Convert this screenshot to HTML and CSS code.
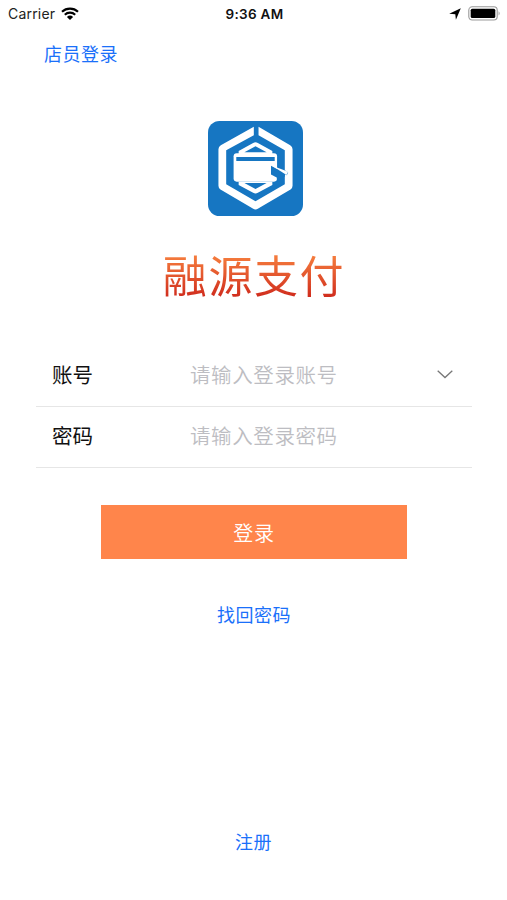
FILE: index.html
```html
<!DOCTYPE html>
<html lang="zh-CN">
<head>
<meta charset="utf-8">
<title>融源支付</title>
<link rel="stylesheet" href="styles.css">
</head>
<body>
<header class="status">
  <div class="status-left"><span>Carrier</span>
    <svg class="wifi" viewBox="0 0 18 14"><path d="M1 4.8a11.6 11.6 0 0 1 16 0M3.8 7.7a7.5 7.5 0 0 1 10.4 0" fill="none" stroke="#000" stroke-width="2.1"/><path d="M5.9 10a4.6 4.6 0 0 1 6.2 0L9 13z"/></svg>
  </div>
  <div class="time">9:36 AM</div>
  <div class="status-right">
    <svg class="arrow" viewBox="0 0 12 12"><path d="M11.8.2 6.9 11.8 6.3 6.3.2 5.7z"/></svg>
    <svg class="battery" viewBox="0 0 33 15"><rect x=".8" y=".8" width="28.4" height="13.2" rx="3.4" fill="#fff" stroke="#999" stroke-width="1.1"/><rect x="2.7" y="2.7" width="24.6" height="9.4" rx="1.6"/><path d="M30.6 5.2q2 2.2 0 4.4z" fill="#999"/></svg>
  </div>
</header>
<nav class="topbar"><a class="link">店员登录</a></nav>
<main>
  <svg class="logo" viewBox="24 19 282 282">
    <rect x="24" y="19" width="282" height="282" rx="34" fill="#1676c2"/>
    <path fill="#fff" d="M160 36 62 91Q55 95 55 103V211Q55 218 61 222L157 279Q165 284 173 279L269 222Q275 218 275 211V103Q275 95 268 91L174 36V61L252 106V165L262 171 258 180 252 177V207L165 257 78 207V106L160 61z"/>
    <path fill="#fff" d="M158 84Q165 80 172 84L215 108V117H115V108zM115 199H215V209L172 232Q165 236 158 232L115 209z"/>
    <path fill="#1676c2" d="M165 94 198 112H132zM165 221 198 203H132z"/>
    <rect x="100" y="115" width="129" height="84" rx="9" fill="#fff"/>
    <path fill="#1676c2" d="M108 126H222V138H108zM211 152 252 173V184L229 198 228 187 211 178z"/>
    <path fill="#fff" d="M213 151 262 170 257 179z"/>
  </svg>
  <h1>融源支付</h1>
  <form class="form">
    <div class="row"><span class="label">账号</span><span class="hint">请输入登录账号</span>
      <svg class="chevron" viewBox="0 0 16 9"><path d="m.7.8 7.3 6.8L15.3.8" fill="none" stroke="#777" stroke-width="1.3"/></svg></div>
    <div class="row"><span class="label">密码</span><span class="hint">请输入登录密码</span></div>
    <button class="submit" type="button">登录</button>
  </form>
  <a class="link">找回密码</a>
</main>
<footer><a class="link">注册</a></footer>
</body>
</html>
```
FILE: styles.css
```css
* { box-sizing: border-box; }
body {
  margin: 0;
  height: 900px;
  display: flex;
  flex-direction: column;
  background: #fff;
  color: #111;
  font-family: Inter, "Noto Sans CJK SC", sans-serif;
}
.status {
  height: 27px;
  display: grid;
  grid-template-columns: 1fr auto 1fr;
  align-items: center;
  padding: 0 6px 0 8px;
  font-size: 14px;
}
.status-left, .status-right { display: flex; align-items: center; }
.status-left { gap: 6px; letter-spacing: .2px; color: #222; }
.status-right { justify-content: flex-end; gap: 7px; }
.wifi { width: 18px; height: 14px; }
.arrow { width: 12px; height: 12px; }
.battery { width: 33px; height: 15px; }
.time { font-weight: 600; font-size: 13.5px; letter-spacing: .3px; }
.topbar { height: 56px; padding: 0 44px; display: flex; align-items: center; }
.link { color: #1a70fa; font-size: 18px; line-height: 26px; letter-spacing: .5px; }
main { display: flex; flex-direction: column; align-items: center; padding: 38px 35px 0 36px; }
.logo { width: 95px; height: 95px; margin-left: 2px; }
h1 {
  margin: 28px 0 0;
  height: 66px;
  line-height: 66px;
  font-size: 44px;
  font-weight: 400;
  letter-spacing: 1.6px;
  background: linear-gradient(#f47a3c 20%, #cf2a1c 82%);
  background-clip: text;
  -webkit-background-clip: text;
  color: transparent;
}
.form { width: 100%; margin-top: 36px; }
.row {
  height: 61px;
  padding: 0 19px 4px 16px;
  display: grid;
  grid-template-columns: 138px 1fr auto;
  align-items: center;
  border-bottom: 1px solid #e6e6e6;
  font-size: 20.5px;
}
.label { color: #111; }
.hint { color: #bdbdc2; letter-spacing: .6px; font-weight: 350; }
.chevron { width: 16px; height: 9px; }
.submit {
  display: block;
  width: 306px;
  height: 54px;
  margin: 37px 0 0 65px;
  padding: 0;
  border: 0;
  background: #ff854b;
  color: #fff;
  font: 350 20px "Noto Sans CJK SC", sans-serif;
  letter-spacing: .8px;
}
main > .link { margin-top: 44px; }
footer { margin-top: auto; margin-bottom: 44px; text-align: center; line-height: 26px; }
```
